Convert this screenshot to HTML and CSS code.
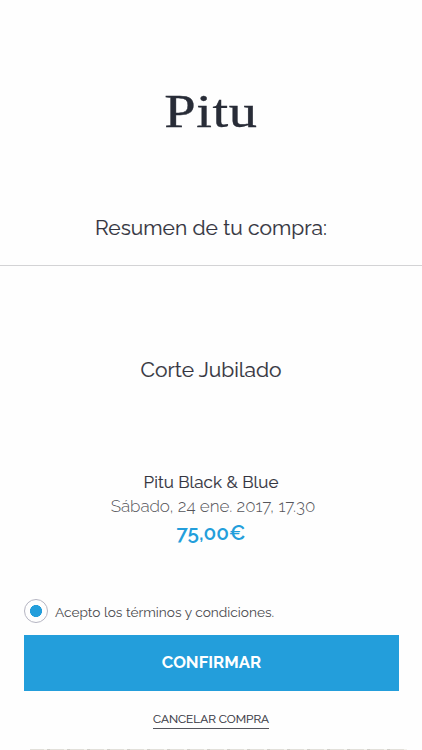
FILE: index.html
```html
<!DOCTYPE html>
<html lang="es">
<head>
<meta charset="utf-8">
<title>Pitu</title>
<link rel="stylesheet" href="styles.css">
</head>
<body>
<main class="page">
  <header class="header">
    <div class="logo"><span class="logo-text">Pitu</span></div>
    <h1 class="title"><span>Resumen de tu compra:</span></h1>
  </header>
  <h2 class="service"><span>Corte Jubilado</span></h2>
  <section class="details">
    <p class="salon"><span>Pitu Black &amp; Blue</span></p>
    <p class="date"><span>Sábado, 24 ene. 2017, 17.30</span></p>
    <p class="price"><span>75,00€</span></p>
  </section>
  <div class="terms">
    <span class="radio"></span>
    <span class="terms-text">Acepto los términos y condiciones.</span>
  </div>
  <button class="confirm" type="button"><span>CONFIRMAR</span></button>
  <div class="cancel-row"><a class="cancel">CANCELAR COMPRA</a></div>
  <div class="next-edge"></div>
</main>
</body>
</html>
```
FILE: styles.css
```css
* { box-sizing: border-box; margin: 0; padding: 0; }
body {
  width: 422px;
  height: 750px;
  overflow: hidden;
  background: #fefefe;
  color: #34353f;
  font-family: Raleway, Lato, "Open Sans", sans-serif;
  text-align: center;
}
.page { display: flex; flex-direction: column; height: 750px; }
.header { height: 266px; border-bottom: 1px solid #d3d3d5; }
.logo { height: 60px; margin-top: 81px; line-height: 60px; }
.logo-text {
  display: inline-block;
  font-family: "Liberation Serif", serif;
  font-size: 47px;
  letter-spacing: 0.5px;
  color: #282c37;
  transform: scaleX(1.2);
  -webkit-text-stroke: 0.35px #282c37;
}
.title { margin-top: 72px; font-size: 21px; line-height: 30px; font-weight: 400; }
.service { margin-top: 89px; font-size: 21px; line-height: 30px; font-weight: 400; }
.title, .service, .salon { -webkit-text-stroke: 0.15px currentColor; }
.details { margin-top: 85px; }
.salon { font-size: 17px; line-height: 24px; letter-spacing: 0.05px; }
.date { padding-left: 4px; font-size: 17px; line-height: 24px; font-weight: 300; letter-spacing: -0.05px; color: #55555a; }
.price { font-size: 20.7px; line-height: 30px; font-weight: 600; color: #239edb; }
.terms { display: flex; align-items: center; gap: 7px; height: 24px; margin: 51px 0 0 24px; }
.radio {
  width: 24px;
  height: 24px;
  border: 1px solid #b5b5c2;
  border-radius: 50%;
  background: radial-gradient(circle, #239edb 5.7px, transparent 6.3px);
}
.terms-text { padding-top: 1px; font-size: 13.7px; color: #4b4b4e; white-space: nowrap; }
.confirm {
  width: 375px;
  height: 56px;
  margin: 12px 0 0 24px;
  padding-bottom: 2px;
  border: 0;
  background: #239edb;
  color: #fff;
  font: 700 16.8px/54px Raleway, Lato, sans-serif;
}
.cancel-row { height: 18px; margin-top: 19px; line-height: 16px; }
.cancel { display: inline-block; height: 18px; border-bottom: 1px solid #55555c; font-size: 11.8px; white-space: nowrap; -webkit-text-stroke: 0.15px currentColor; }
.next-edge {
  width: 377px;
  height: 1px;
  margin: 21px 0 0 30px;
  background: repeating-linear-gradient(90deg, #e2e0da 0 14px, #f3f2ed 14px 17px, #d0cec8 17px 20px);
}
```
